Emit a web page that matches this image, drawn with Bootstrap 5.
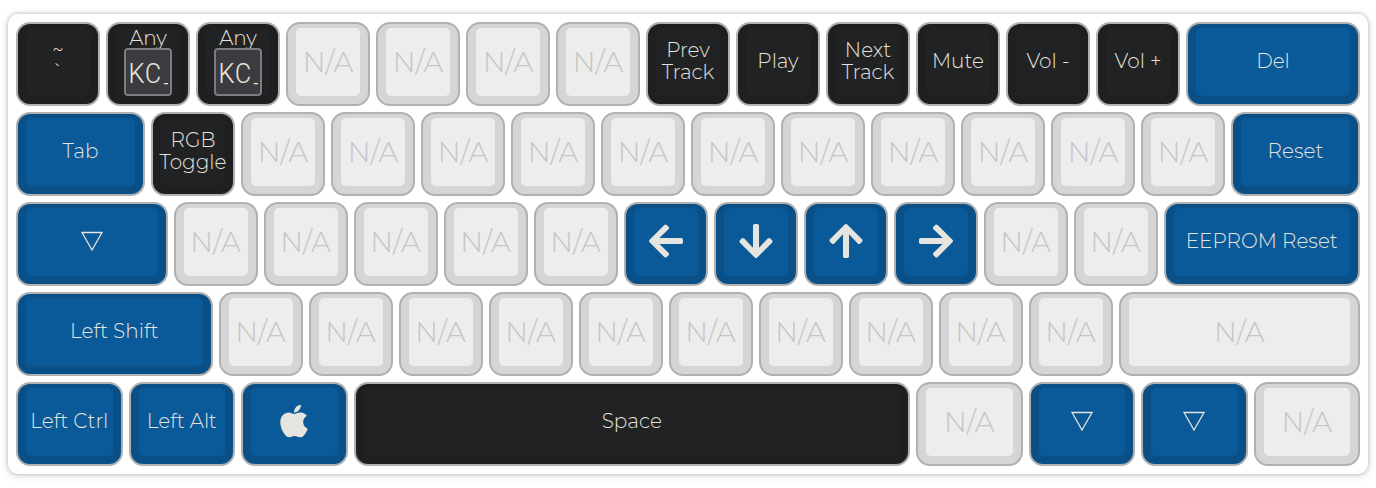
<!DOCTYPE html>
<html lang="en">
<head>
<meta charset="utf-8">
<meta name="viewport" content="width=device-width, initial-scale=1">
<title>Keymap</title>
<link href="https://cdn.jsdelivr.net/npm/bootstrap@5.3.0/dist/css/bootstrap.min.css" rel="stylesheet">
<style>
  body { font-family: Montserrat, Inter, "Noto Sans", sans-serif; background: #fff; }
  .page { padding-top: 14px; }
  .board { border-radius: 10px; padding: 5px; box-shadow: 0 0 5px rgba(0,0,0,.25), 0 2px 8px rgba(0,0,0,.1); }
  .slot { flex: 1 1 0; min-width: 0; }
  .u125 { flex-grow: 1.25; } .u150 { flex-grow: 1.5; } .u175 { flex-grow: 1.75; }
  .u200 { flex-grow: 2; } .u225 { flex-grow: 2.25; } .u275 { flex-grow: 2.75; } .u625 { flex-grow: 6.25; }
  .keycap { width: calc(100% - 6px); height: 84px; margin: 3px; padding: 4px 8px 8px; border: 2px solid #b1b1b1; border-radius: 14px;
    background: #d5d5d5; color: #c6c6c6; font-size: 28px; font-weight: 300; line-height: 22px; white-space: nowrap; }
  .keytop { height: 68px; border-radius: 5px; background: #ededed; }
  .k-dark, .k-mod { color: #e5e4df; font-size: 20px; }
  .k-dark .keytop, .k-mod .keytop { padding-bottom: 2px; }
  .k-dark { background: #1e1f21; } .k-dark .keytop { background: #212224; }
  .k-mod { background: #0a5088; } .k-mod .keytop { background: #0a5999; }
  .code-label { line-height: 20px; }
  .code-box { width: 48px; height: 48px; padding: 0 2px; border: 2px solid #7d7d7f; border-radius: 4px; background: #3b3b40;
    color: #e5e4df; font: 300 28px/44px "Roboto Mono", "Liberation Mono", monospace; }
</style>
</head>
<body>
<svg class="d-none" aria-hidden="true">
  <symbol id="arrow" viewBox="0 32 448 448"><path d="M257.5 445.1l-22.2 22.2c-9.4 9.4-24.6 9.4-33.9 0L7 273c-9.4-9.4-9.4-24.6 0-33.9L201.4 44.7c9.4-9.4 24.6-9.4 33.9 0l22.2 22.2c9.5 9.5 9.3 25-.4 34.3L136.6 216H424c13.3 0 24 10.7 24 24v32c0 13.3-10.7 24-24 24H136.6l120.5 114.8c9.8 9.3 10 24.8.4 34.3z"/></symbol>
  <symbol id="layer" viewBox="0 0 24 22"><path d="M2 2.5h20L12 20z" fill="none" stroke="currentColor" stroke-width="1.3"/></symbol>
  <symbol id="apple" viewBox="0 0 384 512"><path d="M318.7 268.7c-.2-36.7 16.4-64.4 50-84.8-18.8-26.9-47.2-41.7-84.7-44.6-35.5-2.8-74.3 20.7-88.5 20.7-15 0-49.4-19.7-76.4-19.7C63.3 141.2 4 184.8 4 273.5q0 39.3 14.4 81.2c12.8 36.7 59 126.7 107.2 125.2 25.2-.6 43-17.9 75.8-17.9 31.8 0 48.3 17.9 76.4 17.9 48.6-.7 90.4-82.5 102.6-119.3-65.2-30.7-61.7-90-61.7-91.9zm-56.6-164.2c27.3-32.4 24.8-61.9 24-72.5-24.1 1.4-52 16.4-67.9 34.9-17.5 19.8-27.8 44.3-25.6 71.9 26.1 2 49.9-11.4 69.5-34.3z"/></symbol>
</svg>
<main class="page px-2 pb-3">
  <div class="board bg-white" id="board"></div>
</main>
<script src="https://cdn.jsdelivr.net/npm/bootstrap@5.3.0/dist/js/bootstrap.bundle.min.js"></script>
<script>
  const icon = (id, w, h, turn = 0) =>
    `<svg class="d-block" width="${w}" height="${h}" viewBox="0 0 ${w} ${h}" fill="currentColor" aria-hidden="true"><g transform="rotate(${turn} ${w / 2} ${h / 2})"><use href="#${id}" width="${w}" height="${h}"/></g></svg>`;
  const layer = icon('layer', 24, 22), apple = icon('apple', 28, 38);
  const arrow = turn => icon('arrow', 34, 34, turn);
  const na = (n, u = 100) => Array.from({ length: n }, () => ['na', 'N/A', u]);
  const dark = (t, u = 100) => ['dark', t, u], mod = (t, u = 100, name) => ['mod', t, u, name];
  const rows = [
    [dark('~<br>`'), ['any'], ['any'], ...na(4), dark('Prev<br>Track'), dark('Play'), dark('Next<br>Track'),
      dark('Mute'), dark('Vol -'), dark('Vol +'), mod('Del', 200)],
    [mod('Tab', 150), dark('RGB<br>Toggle'), ...na(11), mod('Reset', 150)],
    [mod(layer, 175, 'Layer'), ...na(5), mod(arrow(0), 100, 'Left'), mod(arrow(270), 100, 'Down'), mod(arrow(90), 100, 'Up'),
      mod(arrow(180), 100, 'Right'), ...na(2), mod('EEPROM Reset', 225)],
    [mod('Left Shift', 225), ...na(10), ...na(1, 275)],
    [mod('Left Ctrl', 125), mod('Left Alt', 125), mod(apple, 125, 'Command'), dark('Space', 625), ...na(1, 125),
      mod(layer, 125, 'Layer'), mod(layer, 125, 'Layer'), ...na(1, 125)]
  ];
  const key = ([kind, text, u, name]) => kind === 'any'
    ? `<div class="slot"><div class="keycap k-dark"><label class="keytop code-label d-flex flex-column align-items-center"><span>Any</span><input class="code-box flex-shrink-0" value="KC_" aria-label="Any keycode"></label></div></div>`
    : `<div class="slot u${u}"><button type="button" class="keycap d-block k-${kind}"${name ? ` aria-label="${name}"` : ''}><span class="keytop d-flex align-items-center justify-content-center"><span>${text}</span></span></button></div>`;
  document.getElementById('board').innerHTML = rows.map(r => `<div class="d-flex">${r.map(key).join('')}</div>`).join('');
</script>
</body>
</html>
